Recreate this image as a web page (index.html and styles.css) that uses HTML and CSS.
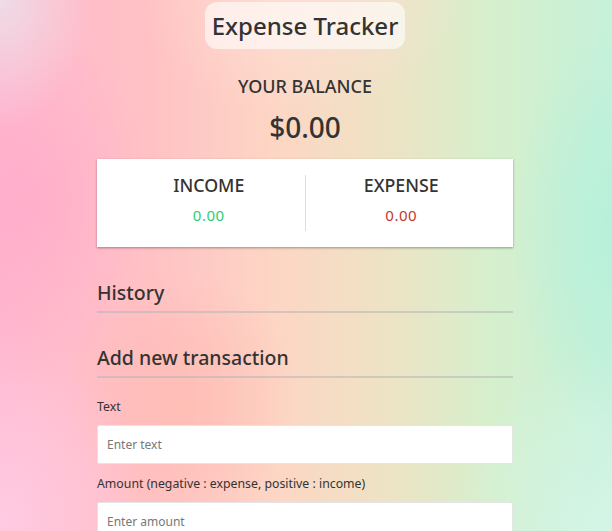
FILE: index.html
```html
<!DOCTYPE html>
<html lang="en">
<head>
<meta charset="utf-8">
<title>Expense Tracker</title>
<link rel="stylesheet" href="styles.css">
</head>
<body>
<div class="page">
  <header class="title-wrap">
    <h1 class="title">Expense Tracker</h1>
  </header>
  <main class="container">
    <h4 class="balance-label">Your Balance</h4>
    <div class="balance">$0.00</div>
    <div class="inc-exp">
      <div class="inc-exp-col">
        <h4 class="inc-exp-label">Income</h4>
        <p class="money plus">0.00</p>
      </div>
      <div class="inc-exp-col">
        <h4 class="inc-exp-label">Expense</h4>
        <p class="money minus">0.00</p>
      </div>
    </div>
    <h3 class="section-title">History</h3>
    <ul class="list"></ul>
    <h3 class="section-title">Add new transaction</h3>
    <form class="form">
      <div class="form-control">
        <label class="label" for="text">Text</label>
        <input class="field" type="text" id="text" placeholder="Enter text">
      </div>
      <div class="form-control">
        <label class="label" for="amount">Amount (negative : expense, positive : income)</label>
        <input class="field" type="text" id="amount" placeholder="Enter amount">
      </div>
    </form>
  </main>
</div>
</body>
</html>
```
FILE: styles.css
```css
* { box-sizing: border-box; }
html, body { margin: 0; padding: 0; height: 100%; }
body {
  font-family: "Noto Sans", "Open Sans", sans-serif;
  color: #333;
  overflow: hidden;
  background:
    radial-gradient(ellipse 90px 130px at 0 0, rgba(236,226,234,0.85), rgba(236,226,234,0) 100%),
    radial-gradient(ellipse 130px 180px at 20px 200px, rgba(255,172,202,0.85), rgba(255,172,202,0) 100%),
    radial-gradient(ellipse 150px 200px at 0 520px, rgba(255,205,228,0.9), rgba(255,205,228,0) 100%),
    radial-gradient(ellipse 120px 130px at 180px 400px, rgba(255,185,175,0.7), rgba(255,185,175,0) 100%),
    radial-gradient(ellipse 100px 200px at 612px 230px, rgba(180,240,218,0.9), rgba(180,240,218,0) 100%),
    radial-gradient(ellipse 160px 180px at 612px 531px, rgba(214,246,232,0.9), rgba(214,246,232,0) 100%),
    radial-gradient(ellipse 160px 120px at 300px 0, rgba(255,226,220,0.6), rgba(255,226,220,0) 100%),
    linear-gradient(90deg, #ffb8d0 0%, #ffc2c4 25%, #fdd6c4 45%, #efe2c4 62%, #d6efcc 80%, #c6f1da 100%);
}
.page { width: 610px; }
.title-wrap { display: flex; justify-content: center; padding-top: 2px; }
.title {
  margin: 0;
  font-size: 24px;
  font-weight: 500;
  line-height: 47px;
  padding: 0 7px;
  background: rgba(255,255,255,0.6);
  border-radius: 12px;
}
.container { width: 416px; margin: 0 auto; }
.balance-label {
  margin: 25px 0 0;
  text-align: center;
  text-transform: uppercase;
  font-size: 18px;
  font-weight: 500;
  line-height: 24px;
}
.balance {
  margin: 11px 0 0;
  text-align: center;
  font-size: 28px;
  font-weight: 500;
  line-height: 36px;
}
.inc-exp {
  margin-top: 14px;
  background: #fff;
  box-shadow: 0 1px 3px rgba(0,0,0,0.12), 0 1px 2px rgba(0,0,0,0.24);
  padding: 16px;
  display: flex;
}
.inc-exp-col { flex: 1; text-align: center; }
.inc-exp-col:first-child { border-right: 1px solid #dedede; }
.inc-exp-label {
  margin: 0;
  text-transform: uppercase;
  font-size: 17.8px;
  font-weight: 500;
  line-height: 20px;
}
.money { margin: 7px 0 3px; font-size: 15px; line-height: 26px; letter-spacing: 0.5px; }
.plus { color: #2ecc71; }
.minus { color: #c0392b; }
.section-title {
  margin: 32px 0 0;
  font-size: 19.5px;
  font-weight: 500;
  line-height: 26px;
  padding-bottom: 5px;
  border-bottom: 2px solid rgba(180,180,190,0.55);
}
.section-title:first-of-type { margin-top: 33px; }
.list { margin: 0; padding: 0; list-style: none; }
.form { margin-top: 20px; }
.form-control { display: flex; flex-direction: column; }
.label { font-size: 12.3px; line-height: 18px; margin-bottom: 9px; }
.field {
  display: block;
  width: 100%;
  height: 39px;
  border: 1px solid #e4e4e4;
  border-radius: 2px;
  padding: 0 9px;
  font-family: inherit;
  font-size: 12px;
  color: #333;
  background: #fff;
  margin-bottom: 11px;
  outline: none;
}
.field::placeholder { color: #777; }
```
